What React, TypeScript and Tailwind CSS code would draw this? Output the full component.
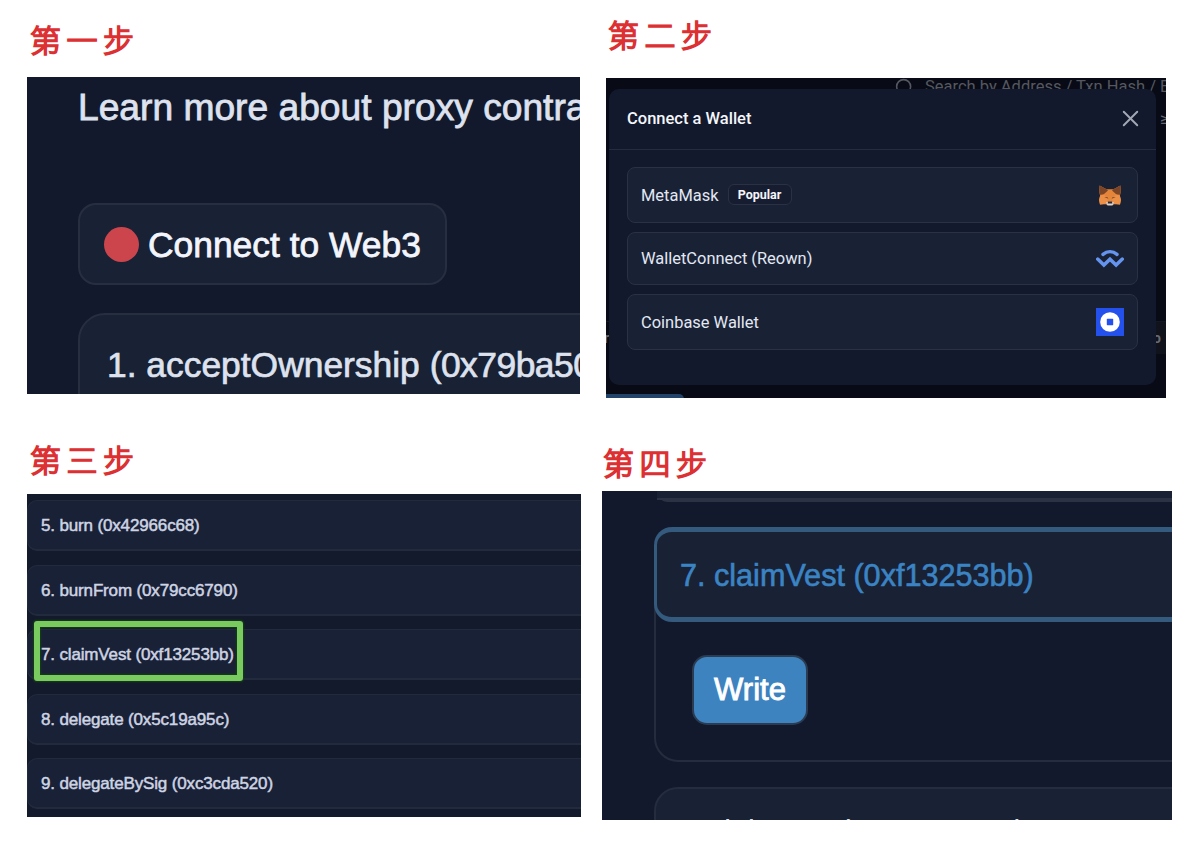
import React from 'react';
import { Search, X } from 'lucide-react';

const helvetica = "font-['Liberation_Sans',Arial,sans-serif]";
const roboto = "font-['Roboto',sans-serif]";

const StepTitle: React.FC<{ text: string; className?: string }> = ({ text, className = '' }) => (
  <h2
    className={`h-9 leading-[33px] text-[31px] tracking-[5.5px] font-light text-[#dc3033] whitespace-nowrap font-['Noto_Sans_CJK_SC',sans-serif] [-webkit-text-stroke:1.7px_#dc3033] [stroke-linejoin:round] ${className}`}
  >
    {text}
  </h2>
);

const FoxIcon = () => (
  <svg width="22" height="21" viewBox="0 0 22 21">
    <path d="M.6.5 7.500 4.200h7L21.400.5l.4 6-.9 4.300 1 4.200-.9 4.500-5.600-.3-2 .8H8.600l-2-.8-5.600.3L.1 15l1-4.200L.2 6.500z" fill="#e5853a" />
    <path d="M.6.5 7.500 4.200 9 5.500 4.500 9.500 1 9.800.2 6.500z" fill="#7d4526" />
    <path d="M21.400.5 14.500 4.200 13 5.500l4.500 4 3.500.3.800-3.300z" fill="#7d4526" />
    <path d="M1.100 10.800 4.500 9.500l4.300 4.500-1 4.500-6.800 1L.1 15z" fill="#ec9048" />
    <path d="M20.900 10.800 17.500 9.500l-4.300 4.500 1 4.500 6.800 1 .9-4.500z" fill="#ec9048" />
    <path d="m5.200 12.200 3.300-.2.800 1.800z" fill="#8a5230" />
    <path d="m16.800 12.200-3.300-.2-.8 1.800z" fill="#8a5230" />
    <path d="m7 17.200 2-.5h4l2 .5-1.500 3.300h-5z" fill="#dcd3cc" />
    <path d="M9 16.500h4l.3 2H8.700z" fill="#2c2b33" />
  </svg>
);

const WalletConnectIcon = () => (
  <svg width="28" height="18" viewBox="0 0 28 18" fill="none" stroke="#6494ee" strokeWidth="3.500" strokeLinecap="round">
    <path d="M7 4.400c4.200-3.500 9.800-3.500 14 0" />
    <path d="m1.700 9.100 6.200 6L14 9.200l6.100 5.900 6.200-6" />
  </svg>
);

const CoinbaseIcon = () => (
  <svg width="28" height="28" viewBox="0 0 28 28">
    <path fill="#2450ec" d="M0 0h28v28H0z" />
    <circle cx="14" cy="14" r="9.800" fill="#fff" />
    <rect x="10.800" y="10.800" width="6.400" height="6.400" rx=".6" fill="#2450ec" />
  </svg>
);

const ConnectPanel = () => (
  <section className={`w-[553px] h-[317px] pl-[51px] overflow-hidden bg-[#13192c] whitespace-nowrap ${helvetica}`}>
    <p className="mt-2 h-11 leading-[44px] text-[37.2px] text-[#dde2ee] [-webkit-text-stroke:0.8px_#dde2ee]">
      Learn more about proxy contract
    </p>
    <button className="mt-[74px] w-[369px] h-[82px] pl-[24px] flex items-center gap-[9px] rounded-[18px] border-2 border-[#272e40] bg-[#192135] text-[35.4px] text-[#f2f5fc] [-webkit-text-stroke:0.8px_#f2f5fc]">
      <span className="size-[35px] rounded-full bg-[#cc454c]" />
      <span className="pt-[3px]">Connect to Web3</span>
    </button>
    <div className="mt-7 w-[600px] h-[100px] pl-[27px] pt-[28px] rounded-t-[27px] border-2 border-[#272e40] bg-[#192135] leading-[44px] text-[35.4px] text-[#dde2ee] [-webkit-text-stroke:0.7px_#dde2ee]">
      1. acceptOwnership <span className="tracking-[-0.5px]">(0x79ba5097)</span>
    </div>
  </section>
);

interface WalletRowProps {
  name: string;
  icon: React.ReactNode;
  popular?: boolean;
  className: string;
}

const WalletRow: React.FC<WalletRowProps> = ({ name, icon, popular, className }) => (
  <div
    className={`flex items-center rounded-lg border border-[#2a3144] bg-[#192135] pl-[13px] pr-[13px] text-[16.45px] text-[#e3e8f3] ${className}`}
  >
    <span className="pt-0.5">{name}</span>
    {popular && (
      <span className="ml-[9px] -mt-0.5 h-[21px] w-16 rounded-md border border-[#2a3144] bg-[#171d31] text-center text-[12.500px] leading-[19px] font-bold text-[#f4f6fb]">
        Popular
      </span>
    )}
    <span className="ml-auto w-7 flex justify-center">{icon}</span>
  </div>
);

const WalletPanel = () => (
  <section className={`relative ml-1 w-[560px] h-[320px] overflow-hidden bg-[#080b16] whitespace-nowrap ${roboto}`}>
    {/* Dimmed page behind the dialog */}
    <div className="flex h-[290px] flex-col">
      <div className="flex h-[19px] items-center pl-[288px] text-[16.500px] text-[#555860]">
        <Search size={21} strokeWidth={1.800} className="mr-2.5 shrink-0" />
        Search by Address / Txn Hash / Block
      </div>
      <div className="mt-[12px] pl-[554px] text-base leading-5 text-[#676a72]">≥</div>
      <div className="mt-[192px] flex h-8 items-center justify-between border-t border-[#141823] text-sm font-bold text-[#676a72]">
        <span className="-ml-0.5">r</span>
        <span className="flex h-8 items-center bg-[#10131c] pr-[5px]">o</span>
      </div>
    </div>
    <div className="mt-[25.500px] h-[5px] w-[78px] rounded-tr-md bg-[#24436a]" />

    <div className="absolute left-[3px] top-[11px] w-[547px] h-[296px] rounded-[10px] bg-[#13192c]">
      <div className="h-[61px] flex items-center justify-between border-b border-[#252c3f] pl-[18px] pr-3 text-[16.500px] font-medium text-[#f4f6fb]">
        Connect a Wallet
        <X size={27} strokeWidth={1.700} className="-mt-px text-[#a3a8b5]" />
      </div>
      <div className="flex flex-col gap-[9px] px-[18px] pt-[17px]">
        <WalletRow name="MetaMask" popular icon={<FoxIcon />} className="h-14" />
        <WalletRow name="WalletConnect (Reown)" icon={<WalletConnectIcon />} className="h-[53px]" />
        <WalletRow name="Coinbase Wallet" icon={<CoinbaseIcon />} className="h-14" />
      </div>
    </div>
  </section>
);

const METHODS = [
  '5. burn (0x42966c68)',
  '6. burnFrom (0x79cc6790)',
  '7. claimVest (0xf13253bb)',
  '8. delegate (0x5c19a95c)',
  '9. delegateBySig (0xc3cda520)',
];

const MethodsPanel = () => (
  <section className={`relative w-[554px] h-[323px] overflow-hidden bg-[#131a2c] ${helvetica}`}>
    <div className="flex w-[600px] flex-col gap-[13.500px] pt-1.5">
      {METHODS.map((m) => (
        <div
          key={m}
          className="h-[51px] rounded-[10px] border border-b-2 border-[#222a3e] bg-[#192136] pl-[13px] text-[17px] tracking-[-0.15px] leading-[50px] text-[#ced4e3] whitespace-nowrap [-webkit-text-stroke:0.5px_#ced4e3]"
        >
          {m}
        </div>
      ))}
    </div>
    {/* Highlight around claimVest */}
    <div className="absolute left-[7px] top-[127px] w-[209px] h-[60px] rounded-[3px] border-[6px] border-[#7acb5f] shadow-[0_0_2px_1px_#164018,inset_0_0_2px_1px_#164018]" />
  </section>
);

const WritePanel = () => (
  <section className={`w-[570px] h-[329px] pl-[52px] overflow-hidden bg-[#13192c] whitespace-nowrap ${helvetica}`}>
    <div className="ml-[3px] w-[600px] h-[11px] rounded-bl-[24px] border-b-[3px] border-[#2a3243]">
      <div className="h-[9px] border-b-2 border-[#2a3243] bg-[#192135]" />
    </div>
    <div className="mt-[25px] w-[600px] h-[235px] rounded-[24px] border-2 border-[#252c3e]">
      <div className="-ml-0.5 -mt-0.5 h-[95px] rounded-[18px] border-y-[5px] border-l-[3px] border-[#345a7e] bg-[#192135] pl-[23px] leading-[86px] text-[30.600px] text-[#3b84c4] [-webkit-text-stroke:0.6px_#3b84c4]">
        7. claimVest (0xf13253bb)
      </div>
      <button className="ml-[36px] mt-[33px] block h-[70px] w-[116px] rounded-[15px] border-2 border-[#2b3c52] bg-[#3d83bf] text-[31px] text-white [-webkit-text-stroke:0.9px_white]">
        Write
      </button>
    </div>
    <div className="mt-[25px] w-[600px] h-[90px] rounded-[24px] border-2 border-[#252c3e] bg-[#192135] pl-6 pt-6 text-[30.600px] leading-[36px] text-[#dde2ee]">
      8. delegate (0x5c19a95c)
    </div>
  </section>
);

export default function App() {
  return (
    <main className="flex w-[1200px] h-[841px] overflow-hidden bg-white">
      <div className="w-[575px] ml-[27px] pt-[22px]">
        <StepTitle text="第一步" className="ml-[3px] mb-[19px]" />
        <ConnectPanel />
        <StepTitle text="第三步" className="ml-[3px] mt-12 mb-4" />
        <MethodsPanel />
      </div>
      <div className="w-[598px] pt-[17px]">
        <StepTitle text="第二步" className="ml-1.5 mb-[25px]" />
        <WalletPanel />
        <StepTitle text="第四步" className="ml-px mt-[47px] mb-2.5" />
        <WritePanel />
      </div>
    </main>
  );
}
